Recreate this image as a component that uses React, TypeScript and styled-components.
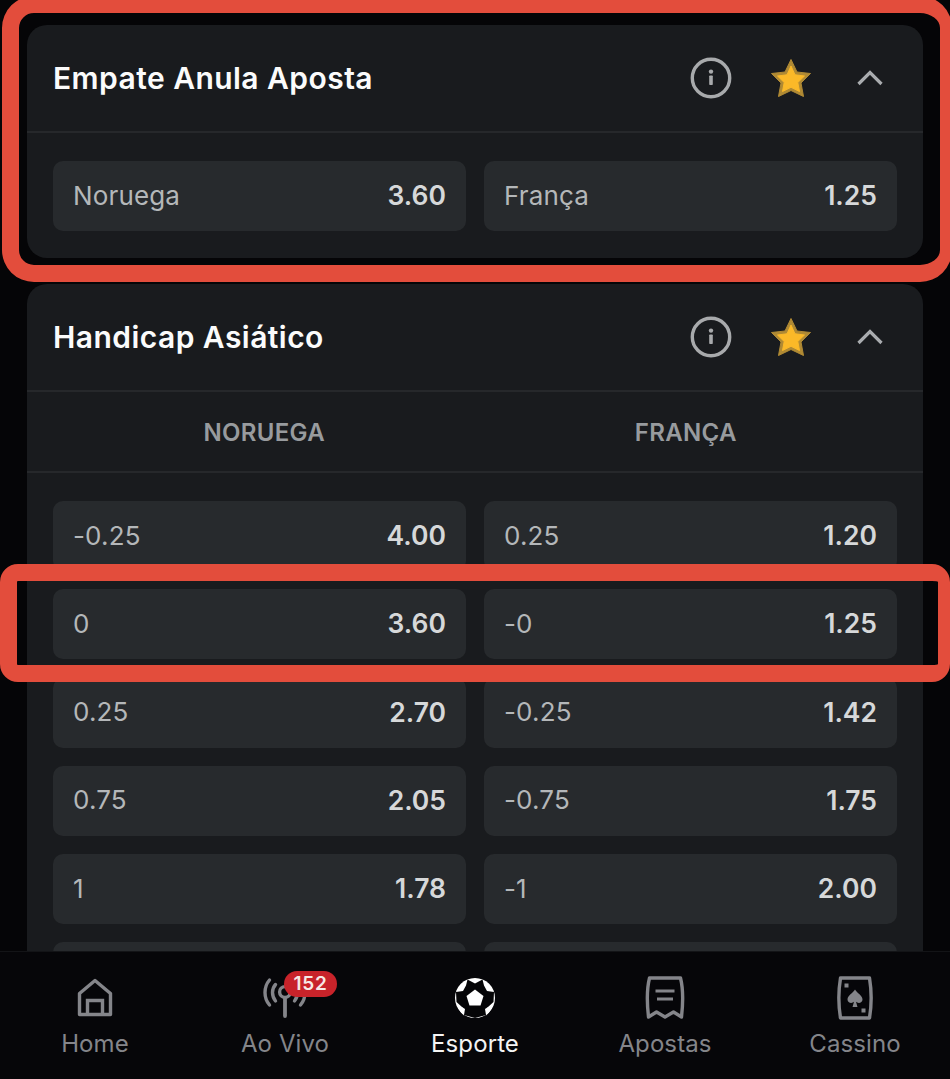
import styled, { createGlobalStyle } from "styled-components";

const GlobalStyle = createGlobalStyle`
  html, body {
    margin: 0;
    padding: 0;
    background: #050507;
    font-family: "Inter", "Liberation Sans", sans-serif;
  }
`;

const handicapRows = [
  ["-0.25", "4.00", "0.25", "1.20"],
  ["0", "3.60", "-0", "1.25"],
  ["0.25", "2.70", "-0.25", "1.42"],
  ["0.75", "2.05", "-0.75", "1.75"],
  ["1", "1.78", "-1", "2.00"],
  ["", "", "", ""],
];

function InfoIcon() {
  return (
    <svg width="42" height="42" viewBox="0 0 42 42" fill="none">
      <circle cx="21" cy="21" r="18.7" stroke="#a8aaac" strokeWidth="3.400" />
      <circle cx="21" cy="14.6" r="2.200" fill="#a8aaac" />
      <rect x="19.200" y="18.500" width="3.600" height="9.500" rx="0.8" fill="#a8aaac" />
    </svg>
  );
}

function StarIcon() {
  return (
    <svg width="42" height="42" viewBox="-1 -1 42 42">
      <path
        d="M21 1.500 L27 14 L40.500 15.500 L31 25 L33.500 38.500 L21 32.500 L8.500 38.500 L11 25 L1.500 15.500 L15 14 Z"
        fill="#b08a34"
        stroke="#b08a34"
        strokeLinejoin="round"
      />
      <path
        d="M21 8 L25 16.800 L34.500 18 L27.800 24.500 L29.500 33.500 L21 29.300 L12.500 33.500 L14.200 24.500 L7.500 18 L17 16.800 Z"
        fill="#fbb928"
        stroke="#fbb928"
        strokeLinejoin="round"
      />
    </svg>
  );
}

function ChevronIcon() {
  return (
    <svg width="28" height="18" viewBox="0 0 28 18" fill="none">
      <path d="M2.500 15 L14 3.500 L25.500 15" stroke="#a9acaf" strokeWidth="3.200" />
    </svg>
  );
}

function HomeIcon() {
  return (
    <svg width="36" height="40" viewBox="0 0 36 40" fill="none" stroke="#84858a" strokeWidth="3.400">
      <path d="M2.500 36.500 V15.500 L18 2.500 L33.500 15.500 V36.500 Z" strokeLinejoin="round" />
      <path d="M10.500 36.500 V22.500 H25.500 V36.500" />
    </svg>
  );
}

function LiveIcon() {
  return (
    <svg width="44" height="42" viewBox="0 0 44 42" fill="none" stroke="#84858a" strokeLinecap="round">
      <circle cx="22" cy="15" r="5.400" strokeWidth="3.400" />
      <path d="M22 21 V39" strokeWidth="3.800" />
      <path d="M12.500 7.500 C8.500 12 8.500 19 12.500 24" strokeWidth="3.400" />
      <path d="M6.500 3 C0.500 10 0.500 21 6.500 28" strokeWidth="3.400" />
      <path d="M31.500 7.500 C35.500 12 35.500 19 31.500 24" strokeWidth="3.400" />
      <path d="M37.500 3 C43.500 10 43.500 21 37.500 28" strokeWidth="3.400" />
    </svg>
  );
}

function BallIcon() {
  return (
    <svg width="42" height="42" viewBox="0 0 42 42">
      <circle cx="21" cy="21" r="20" fill="#fff" />
      <path
        d="M13.500 2.500 L21 6.500 L28.500 2.500 L30 8.500 L33 14 L40 15 L39.500 25 L34 30 L31 32 L32 38 L21 41 L10 38 L11 32 L8 30 L2.500 25 L2 15 L9 14 L12 8.500 Z"
        fill="#050507"
      />
      <path d="M21 10.500 L32 18.500 L28 31.500 H14 L10 18.500 Z" fill="#050507" />
      <path d="M21 12.500 L29.500 19 L26.500 28.500 H15.500 L12.500 19 Z" fill="#fff" />
      <path d="M3 27 L9 31 L10 38.500 A20 20 0 0 1 3 27 Z" fill="#fff" />
      <path d="M39 27 L33 31 L32 38.500 A20 20 0 0 0 39 27 Z" fill="#fff" />
    </svg>
  );
}

function ReceiptIcon() {
  return (
    <svg width="40" height="44" viewBox="0 0 40 44" fill="none" stroke="#84858a" strokeWidth="3.400">
      <path
        d="M4.500 2 H35.500 C38 12 38 28 36.500 41 L28.500 36 L20 41 L11.500 36 L3.500 41 C2 28 2 12 4.500 2 Z"
        strokeLinejoin="round"
      />
      <path d="M10.500 15 H29.500" strokeWidth="3" />
      <path d="M12 23 H28" strokeWidth="3" />
    </svg>
  );
}

function CardIcon() {
  return (
    <svg width="36" height="44" viewBox="0 0 36 44" fill="none">
      <path
        d="M3.500 2 H32.500 C34.500 14 34.500 30 32.500 42 H3.500 C1.500 30 1.500 14 3.500 2 Z"
        stroke="#84858a"
        strokeWidth="3.400"
        strokeLinejoin="round"
      />
      <rect x="7.500" y="7.500" width="4" height="4" fill="#84858a" />
      <rect x="24.500" y="32.500" width="4" height="4" fill="#84858a" />
      <path
        d="M18 13.500 C20 17 25.500 19.500 25.500 23.500 C25.500 27 21 27.800 19 25.800 L20.500 31 H15.500 L17 25.800 C15 27.800 10.500 27 10.500 23.500 C10.500 19.500 16 17 18 13.500 Z"
        fill="#84858a"
      />
    </svg>
  );
}

function MarketHeader({ title }: { title: string }) {
  return (
    <Header>
      <Title>{title}</Title>
      <HeaderIcons>
        <IconSlot $width={42}>
          <InfoIcon />
        </IconSlot>
        <IconSlot $width={42}>
          <StarIcon />
        </IconSlot>
        <IconSlot $width={44}>
          <ChevronIcon />
        </IconSlot>
      </HeaderIcons>
    </Header>
  );
}

function Odd({ label, value }: { label: string; value: string }) {
  return (
    <OddButton>
      <OddLabel>{label}</OddLabel>
      <OddValue>{value}</OddValue>
    </OddButton>
  );
}

export default function App() {
  return (
    <Page>
      <GlobalStyle />
      <Card>
        <MarketHeader title="Empate Anula Aposta" />
        <OddsGrid>
          <Odd label="Noruega" value="3.60" />
          <Odd label="França" value="1.25" />
        </OddsGrid>
      </Card>
      <Card>
        <MarketHeader title="Handicap Asiático" />
        <Columns>
          <ColumnName>NORUEGA</ColumnName>
          <ColumnName>FRANÇA</ColumnName>
        </Columns>
        <OddsGrid>
          {handicapRows.map((row, i) => (
            <Row key={i}>
              <Odd label={row[0]} value={row[1]} />
              <Odd label={row[2]} value={row[3]} />
            </Row>
          ))}
        </OddsGrid>
      </Card>

      <TopHighlight />
      <RowHighlight />

      <BottomNav>
        <NavItem>
          <NavIcon>
            <HomeIcon />
          </NavIcon>
          Home
        </NavItem>
        <NavItem>
          <NavIcon>
            <LiveIcon />
            <Badge>152</Badge>
          </NavIcon>
          Ao Vivo
        </NavItem>
        <NavItem $active>
          <NavIcon>
            <BallIcon />
          </NavIcon>
          Esporte
        </NavItem>
        <NavItem>
          <NavIcon>
            <ReceiptIcon />
          </NavIcon>
          Apostas
        </NavItem>
        <NavItem>
          <NavIcon>
            <CardIcon />
          </NavIcon>
          Cassino
        </NavItem>
      </BottomNav>
    </Page>
  );
}

const Page = styled.div`
  position: relative;
  width: 950px;
  height: 1079px;
  overflow: hidden;
  box-sizing: border-box;
  padding: 25px 27px 0;
  display: flex;
  flex-direction: column;
  gap: 26px;
  background: #050507;
`;

const Card = styled.section`
  flex-shrink: 0;
  background: #191b1e;
  border-radius: 20px;
  overflow: hidden;
`;

const Header = styled.div`
  height: 108px;
  box-sizing: border-box;
  padding: 0 31px 0 26px;
  display: flex;
  align-items: center;
  justify-content: space-between;
  border-bottom: 2px solid #26282b;
`;

const Title = styled.h2`
  margin: 0;
  font-size: 30px;
  font-weight: 600;
  letter-spacing: 0.45px;
  color: #fbfbfb;
`;

const HeaderIcons = styled.div`
  display: flex;
  align-items: center;
  gap: 37px;
`;

const IconSlot = styled.div<{ $width: number }>`
  width: ${(p) => p.$width}px;
  display: flex;
  justify-content: center;
  align-items: center;
`;

const OddsGrid = styled.div`
  padding: 28px 26px 27px;
  display: grid;
  grid-template-columns: 1fr 1fr;
  gap: 18.25px 18px;
`;

const Row = styled.div`
  grid-column: 1 / 3;
  display: grid;
  grid-template-columns: 1fr 1fr;
  gap: 18px;
`;

const OddButton = styled.div`
  height: 70px;
  box-sizing: border-box;
  padding: 0 20px 2px;
  display: flex;
  align-items: center;
  justify-content: space-between;
  background: #272a2d;
  border-radius: 10px;
`;

const OddLabel = styled.span`
  font-size: 26px;
  letter-spacing: 0.15px;
  color: #b4b7b9;
`;

const OddValue = styled.span`
  font-size: 26.5px;
  font-weight: 600;
  color: #d6d8d9;
`;

const Columns = styled.div`
  height: 81px;
  box-sizing: border-box;
  display: grid;
  grid-template-columns: 1fr 1fr;
  padding: 2px 26.5px 0;
  align-items: center;
  border-bottom: 2px solid #26282b;
`;

const ColumnName = styled.div`
  text-align: center;
  font-size: 24px;
  font-weight: 600;
  letter-spacing: 0.3px;
  color: #989b9e;
`;

const TopHighlight = styled.div`
  position: absolute;
  left: 2px;
  top: -4px;
  width: 950px;
  height: 286px;
  box-sizing: border-box;
  border: 17px solid #e34d3c;
  border-right-width: 12px;
  border-radius: 32px;
`;

const RowHighlight = styled.div`
  position: absolute;
  left: 0;
  top: 564px;
  width: 950px;
  height: 118px;
  box-sizing: border-box;
  border: 17px solid #e34d3c;
  border-right-width: 12px;
  border-radius: 18px;
`;

const BottomNav = styled.nav`
  position: absolute;
  left: 0;
  right: 0;
  bottom: 0;
  height: 128px;
  box-sizing: border-box;
  display: grid;
  grid-template-columns: repeat(5, 1fr);
  background: #060609;
  border-top: 1px solid #131417;
`;

const NavItem = styled.div<{ $active?: boolean }>`
  display: flex;
  flex-direction: column;
  align-items: center;
  padding-top: 24px;
  font-size: 24px;
  line-height: 30px;
  letter-spacing: 0.1px;
  color: ${(p) => (p.$active ? "#f4f4f4" : "#84858a")};
`;

const NavIcon = styled.div`
  position: relative;
  height: 44px;
  margin-bottom: 9px;
  display: flex;
  align-items: center;
  justify-content: center;
`;

const Badge = styled.span`
  position: absolute;
  left: 21px;
  top: -5px;
  width: 53px;
  height: 26px;
  border-radius: 13px;
  display: flex;
  align-items: center;
  justify-content: center;
  background: #c8232a;
  color: #f6e9e6;
  font-size: 19px;
  font-weight: 600;
  letter-spacing: 0.8px;
`;
